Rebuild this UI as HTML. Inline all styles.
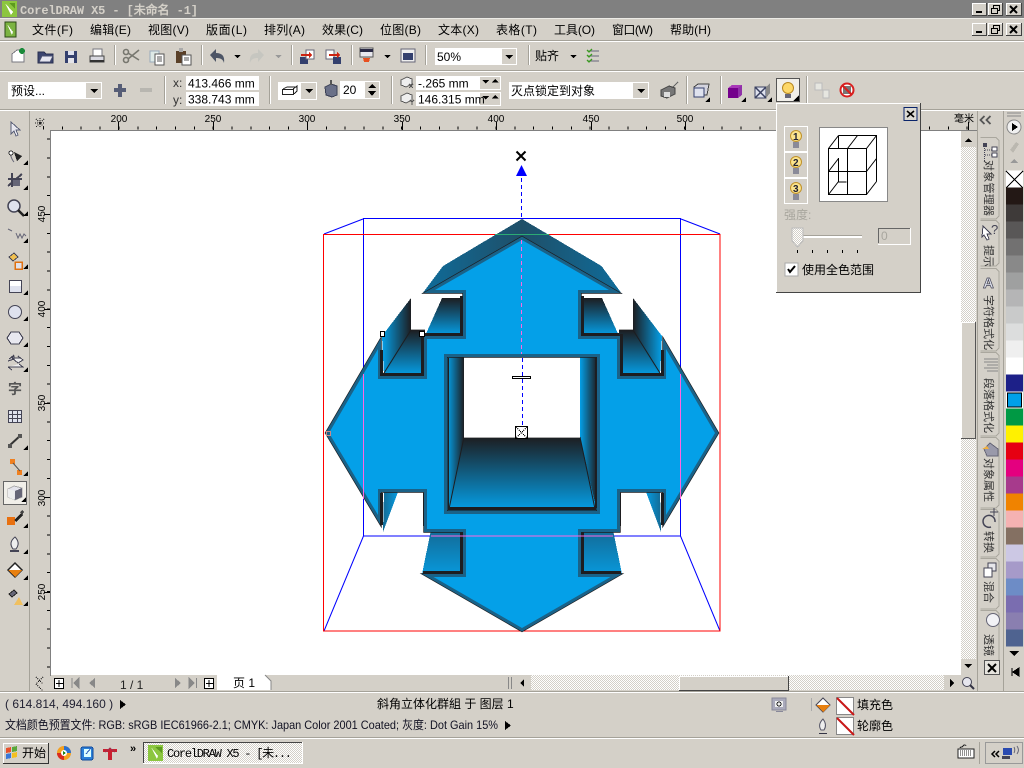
<!DOCTYPE html>
<html><head><meta charset="utf-8"><title>CorelDRAW X5</title>
<style>
html,body{margin:0;padding:0;background:#d4d0c8;overflow:hidden}
svg{display:block;position:absolute;left:0;top:0}
text{font-family:"Liberation Sans","WenQuanYi Zen Hei","Noto Sans CJK SC",sans-serif;font-size:12px;fill:#000}
.m{font-family:"Liberation Mono","WenQuanYi Zen Hei",monospace}
.r{font-size:10px;text-anchor:middle}
.d{font-size:11px;fill:#333}
</style></head><body>
<svg width="1024" height="768" viewBox="0 0 1024 768" xmlns="http://www.w3.org/2000/svg" shape-rendering="crispEdges">
<defs>
<pattern id="dith" width="2" height="2" patternUnits="userSpaceOnUse"><rect width="2" height="2" fill="#fff"/><rect width="1" height="1" fill="#d4d0c8"/><rect x="1" y="1" width="1" height="1" fill="#d4d0c8"/></pattern>
<linearGradient id="gv" x1="0" y1="0" x2="0" y2="1"><stop offset="0" stop-color="#1d1d20"/><stop offset="1" stop-color="#04a0e8"/></linearGradient>
<linearGradient id="gh" x1="0" y1="0" x2="1" y2="0"><stop offset="0" stop-color="#04a0e8"/><stop offset="1" stop-color="#1d1d20"/></linearGradient>
<linearGradient id="glow" x1="0" y1="0" x2="0" y2="1"><stop offset="0" stop-color="#136a96"/><stop offset="1" stop-color="#0898da"/></linearGradient>
<linearGradient id="gt" x1="0" y1="0" x2="1" y2="0"><stop offset="0" stop-color="#0f6c9a"/><stop offset=".5" stop-color="#1f4f68"/><stop offset="1" stop-color="#0f6c9a"/></linearGradient>
<linearGradient id="gs" x1="0" y1="0" x2="1" y2="0"><stop offset="0" stop-color="#156a94"/><stop offset="1" stop-color="#059ce2"/></linearGradient>
</defs>
<rect width="1024" height="768" fill="#d4d0c8"/>

<!-- title bar -->
<rect width="1024" height="18" fill="#808080"/>
<rect y="18" width="1024" height="1" fill="#ecebe6"/>
<rect x="2" y="1" width="15" height="16" fill="#8cc63f"/>
<path d="M5 3l8 9-2 3z" fill="#fff"/><path d="M9 3h6v6z" fill="#5d9a1e"/>
<text class="m" x="20" y="14" font-weight="bold" style="fill:#d4d0c8" textLength="178">CorelDRAW X5 - [未命名 -1]</text>
<g>
<rect x="972" y="3" width="15" height="13" fill="#d4d0c8"/><path d="M972.500 16V3.500H987" stroke="#fff" fill="none"/><path d="M986.500 3V15.500H972" stroke="#404040" fill="none"/><rect x="976" y="11" width="6" height="2" fill="#000"/>
<rect x="988" y="3" width="15" height="13" fill="#d4d0c8"/><path d="M988.500 16V3.500H1003" stroke="#fff" fill="none"/><path d="M1002.500 3V15.500H988" stroke="#404040" fill="none"/><rect x="993.500" y="5.500" width="6" height="5" fill="none" stroke="#000"/><rect x="991.500" y="8.500" width="6" height="5" fill="#d4d0c8" stroke="#000"/>
<rect x="1006" y="3" width="16" height="13" fill="#d4d0c8"/><path d="M1006.500 16V3.500H1022" stroke="#fff" fill="none"/><path d="M1021.500 3V15.500H1006" stroke="#404040" fill="none"/><path d="M1010 6l7 7M1017 6l-7 7" stroke="#000" stroke-width="2" shape-rendering="auto"/>
</g>
<g transform="translate(0,20)">
<rect x="972" y="3" width="15" height="13" fill="#d4d0c8"/><path d="M972.500 16V3.500H987" stroke="#fff" fill="none"/><path d="M986.500 3V15.500H972" stroke="#404040" fill="none"/><rect x="976" y="11" width="6" height="2" fill="#000"/>
<rect x="988" y="3" width="15" height="13" fill="#d4d0c8"/><path d="M988.500 16V3.500H1003" stroke="#fff" fill="none"/><path d="M1002.500 3V15.500H988" stroke="#404040" fill="none"/><rect x="993.500" y="5.500" width="6" height="5" fill="none" stroke="#000"/><rect x="991.500" y="8.500" width="6" height="5" fill="#d4d0c8" stroke="#000"/>
<rect x="1006" y="3" width="16" height="13" fill="#d4d0c8"/><path d="M1006.500 16V3.500H1022" stroke="#fff" fill="none"/><path d="M1021.500 3V15.500H1006" stroke="#404040" fill="none"/><path d="M1010 6l7 7M1017 6l-7 7" stroke="#000" stroke-width="2" shape-rendering="auto"/>
</g>

<!-- menu -->
<rect x="5" y="22" width="11" height="15" fill="#7cb342" stroke="#2b4a17"/><path d="M7 24l6 8-1 3z" fill="#fff"/>
<text x="32" y="34" textLength="41">文件(F)</text>
<text x="90" y="34" textLength="41">编辑(E)</text>
<text x="148" y="34" textLength="41">视图(V)</text>
<text x="206" y="34" textLength="41">版面(L)</text>
<text x="264" y="34" textLength="41">排列(A)</text>
<text x="322" y="34" textLength="41">效果(C)</text>
<text x="380" y="34" textLength="41">位图(B)</text>
<text x="438" y="34" textLength="41">文本(X)</text>
<text x="496" y="34" textLength="41">表格(T)</text>
<text x="554" y="34" textLength="41">工具(O)</text>
<text x="612" y="34" textLength="41">窗口(W)</text>
<text x="670" y="34" textLength="41">帮助(H)</text>
<rect y="40" width="1024" height="1" fill="#a5a299"/><rect y="41" width="1024" height="1" fill="#fff"/>

<!-- toolbar 1 -->
<path d="M12 54l5-4h7v12H12z" fill="#fff" stroke="#77777f"/><circle cx="22" cy="51" r="3" fill="#1a8a3a"/>
<path d="M38 63V52h6l2 2h7v9z" fill="#3b4470" stroke="#2a3050"/><path d="M39 62l3-6h11l-3 6z" fill="#e6e6f0" stroke="#4a5070"/>
<rect x="65" y="51" width="12" height="12" fill="#34406e"/><rect x="68" y="51" width="6" height="4" fill="#dfe2ee"/><rect x="68" y="58" width="6" height="5" fill="#e4e4ea"/>
<rect x="93" y="49" width="9" height="7" fill="#fff" stroke="#77777f"/><rect x="90" y="56" width="14" height="6" fill="#d8d8e0" stroke="#444"/><rect x="90" y="60" width="14" height="2" fill="#333"/>
<rect x="114" y="45" width="1" height="20" fill="#a5a299"/><rect x="115" y="45" width="1" height="20" fill="#fff"/>
<g shape-rendering="auto" fill="none" stroke="#77776f" stroke-width="1.600"><circle cx="126" cy="60" r="2.500"/><circle cx="126" cy="52" r="2.500"/><path d="M128 53l11 7M128 59l11-9"/></g>
<rect x="150" y="51" width="9" height="11" fill="#dde9e6" stroke="#9ab"/><rect x="155" y="54" width="9" height="11" fill="#fff" stroke="#555"/><path d="M157 57h5M157 59h5M157 61h5" stroke="#555"/>
<rect x="176" y="51" width="10" height="12" fill="#5a4028"/><rect x="179" y="48" width="4" height="4" fill="#aaa"/><rect x="182" y="55" width="9" height="10" fill="#fff" stroke="#555"/><path d="M184 58h5M184 60h5" stroke="#555"/>
<rect x="201" y="45" width="1" height="20" fill="#a5a299"/><rect x="202" y="45" width="1" height="20" fill="#fff"/>
<path d="M210 55l6-6v4c6 0 9 3 8 10-1-4-4-5-8-5v4z" fill="#4d5566" shape-rendering="auto"/>
<path d="M234 55h7l-3.500 3z" fill="#000"/>
<path d="M264 55l-6-6v4c-6 0-9 3-8 10 1-4 4-5 8-5v4z" fill="#c6c6c0" shape-rendering="auto"/>
<path d="M275 55h7l-3.500 3z" fill="#999"/>
<rect x="291" y="45" width="1" height="20" fill="#a5a299"/><rect x="292" y="45" width="1" height="20" fill="#fff"/>
<rect x="300" y="57" width="8" height="7" fill="#34406e"/><rect x="306" y="50" width="8" height="9" fill="#fff" stroke="#667"/><path d="M301 54h8v-2l3 3-3 3v-2h-8z" fill="#c21" />
<rect x="326" y="50" width="8" height="9" fill="#fff" stroke="#667"/><rect x="333" y="57" width="8" height="7" fill="#34406e"/><path d="M329 54h8v-2l3 3-3 3v-2h-8z" fill="#c21"/>
<rect x="351" y="45" width="1" height="20" fill="#a5a299"/><rect x="352" y="45" width="1" height="20" fill="#fff"/>
<rect x="360" y="48" width="13" height="9" fill="#e8e8ee" stroke="#555"/><rect x="360" y="49" width="13" height="3" fill="#2a2a44"/><path d="M363 58h7l-1 4h-5z" fill="#e85020"/>
<path d="M384 55h7l-3.500 3z" fill="#000"/>
<rect x="401" y="49" width="14" height="13" fill="#eee" stroke="#667"/><rect x="403" y="53" width="10" height="7" fill="#34406e"/>
<rect x="425" y="45" width="1" height="20" fill="#a5a299"/><rect x="426" y="45" width="1" height="20" fill="#fff"/>
<rect x="435" y="48" width="82" height="17" fill="#fff"/><rect x="502" y="49" width="14" height="15" fill="#d4d0c8"/><path d="M505 55h8l-4 4z" fill="#000"/>
<text x="437" y="61">50%</text>
<rect x="528" y="45" width="1" height="20" fill="#a5a299"/><rect x="529" y="45" width="1" height="20" fill="#fff"/>
<text x="535" y="60">贴齐</text><path d="M570 55h7l-3.500 3z" fill="#000"/>
<path d="M588 51h11M588 56h11M588 61h11" stroke="#66667a"/><path d="M587 50l2 2 3-3M587 55l2 2 3-3M587 60l2 2 3-3" fill="none" stroke="#3a9a20" stroke-width="1.300" shape-rendering="auto"/>
<rect y="70" width="1024" height="1" fill="#a5a299"/><rect y="71" width="1024" height="1" fill="#fff"/>

<!-- toolbar 2 -->
<rect x="8" y="82" width="94" height="17" fill="#fff"/><rect x="86" y="83" width="15" height="15" fill="#d4d0c8"/><path d="M90 89h8l-4 4z" fill="#000"/>
<text x="11" y="95">预设...</text>
<rect x="118" y="84" width="4" height="13" fill="#565d76"/><rect x="114" y="88" width="12" height="4" fill="#565d76"/>
<rect x="140" y="88" width="12" height="4" fill="#b8b6b0"/>
<rect x="164" y="76" width="1" height="28" fill="#a5a299"/><rect x="165" y="76" width="1" height="28" fill="#fff"/>
<text x="173" y="87" style="fill:#333">x:</text><text x="173" y="104" style="fill:#333">y:</text>
<rect x="186" y="76" width="73" height="14" fill="#fff"/><rect x="186" y="92" width="73" height="14" fill="#fff"/>
<text x="188" y="87.500">413.466 mm</text><text x="188" y="103.500">338.743 mm</text>
<rect x="269" y="76" width="1" height="28" fill="#a5a299"/><rect x="270" y="76" width="1" height="28" fill="#fff"/>
<rect x="278" y="82" width="39" height="18" fill="#fff"/><rect x="301" y="83" width="15" height="16" fill="#d4d0c8"/><path d="M305 89h8l-4 4z" fill="#000"/>
<path d="M282.500 89.500h11v5h-11zM293 89l4-3v5l-3 3M283 89l4-2h10" fill="#fff" stroke="#222"/>
<path d="M325 87l6-3 6 2v9l-5 2-6-2z" fill="#6a7088" stroke="#3a3f55"/><path d="M331 80v5" stroke="#555" stroke-width="2"/>
<rect x="340" y="81" width="40" height="18" fill="#fff"/><rect x="365" y="82" width="14" height="16" fill="#d4d0c8"/><path d="M372 84l-4 4h8zM372 96l-4-5h8z" fill="#000"/>
<text x="343" y="94">20</text>
<rect x="391" y="76" width="1" height="28" fill="#a5a299"/><rect x="392" y="76" width="1" height="28" fill="#fff"/>
<path d="M401 80l6-3 5 2v5l-6 3-5-2z" fill="#eee" stroke="#555"/><path d="M409 84l4 4M413 84l-4 4" stroke="#555"/>
<path d="M401 96l6-3 5 2v5l-6 3-5-2z" fill="#eee" stroke="#555"/><path d="M410 100l2 2 2-2M412 102v3" stroke="#555" fill="none"/>
<rect x="416" y="76" width="85" height="14" fill="#fff"/><rect x="416" y="92" width="85" height="14" fill="#fff"/>
<rect x="480" y="77" width="20" height="12" fill="#d4d0c8"/><rect x="480" y="93" width="20" height="12" fill="#d4d0c8"/>
<path d="M482 80h7l-3.500 3.500zM495 79l-3.500 3.500h7zM482 96h7l-3.500 3.500zM495 95l-3.500 3.500h7z" fill="#000"/>
<text x="418" y="87.500">-.265 mm</text><text x="418" y="103.500">146.315 mm</text>
<rect x="509" y="82" width="140" height="17" fill="#fff"/><rect x="633" y="83" width="15" height="15" fill="#d4d0c8"/><path d="M637 89h8l-4 4z" fill="#000"/>
<text x="511" y="95">灭点锁定到对象</text>
<path d="M661 90l8-4 6 2v6l-8 4-6-2z" fill="#777" stroke="#444"/><rect x="664" y="92" width="6" height="5" fill="#ddd"/><path d="M673 87l5-5" stroke="#666"/>
<rect x="686" y="76" width="1" height="28" fill="#a5a299"/><rect x="687" y="76" width="1" height="28" fill="#fff"/>
<path d="M694 87l4-3h11l-2 11h-13z" fill="#d4d4de" stroke="#444"/><rect x="694" y="88" width="10" height="9" fill="#dfe2ee" stroke="#34406e"/>
<path d="M705 102h5v-5z" fill="#000"/>
<rect x="720" y="76" width="1" height="28" fill="#a5a299"/><rect x="721" y="76" width="1" height="28" fill="#fff"/>
<rect x="728" y="88" width="10" height="10" fill="#74008c"/><path d="M728 88l4-3h10l-4 3z" fill="#a838b8"/><path d="M738 88l4-3v10l-4 3z" fill="#9030a8"/><path d="M741 102h5v-5z" fill="#000"/>
<rect x="755" y="87" width="11" height="11" fill="#dfe2ee" stroke="#3a4060"/><path d="M755 87l11 11M766 87l-11 11" stroke="#3a4060" stroke-width="1.500" shape-rendering="auto"/><path d="M766 87l4-4v10l-4 5z" fill="#888"/><path d="M767 102h5v-5z" fill="#000"/>
<rect x="776.500" y="78.500" width="23" height="23" fill="#f1efe9" stroke="#555"/>
<circle cx="788" cy="88" r="5.500" fill="#fdd868" stroke="#b88820" shape-rendering="auto"/><rect x="785" y="94" width="6" height="4" fill="#667"/><path d="M793 101h6v-6z" fill="#000"/>
<rect x="806" y="76" width="1" height="28" fill="#a5a299"/><rect x="807" y="76" width="1" height="28" fill="#fff"/>
<rect x="815" y="83" width="7" height="7" fill="#e6e6e0" stroke="#bbb"/><rect x="823" y="90" width="6" height="8" fill="#e6e6e0" stroke="#bbb"/>
<circle cx="847" cy="90" r="6.500" fill="#fff" stroke="#d82020" stroke-width="2" shape-rendering="auto"/><rect x="843" y="86" width="8" height="8" fill="#777"/><path d="M842 85l10 10" stroke="#d82020" stroke-width="2" shape-rendering="auto"/>
<rect y="109" width="1024" height="1" fill="#a5a299"/><rect y="110" width="1024" height="1" fill="#fff"/>

<!-- rulers -->
<rect x="29" y="111" width="1" height="581" fill="#a5a299"/>
<path d="M36 119l8 8M44 119l-8 8M40 118v10M35 123h10" stroke="#222" stroke-dasharray="1 1"/>
<line x1="43" y1="128" x2="975" y2="128" stroke="#000" stroke-width="3" stroke-dasharray="1 17.850"/>
<line x1="48.500" y1="138.600" x2="48.500" y2="672" stroke="#000" stroke-width="3" stroke-dasharray="1 17.850"/>
<path d="M118.500 122v8M213.500 122v8M307.500 122v8M402.500 122v8M496.500 122v8M591.500 122v8M685.500 122v8M779.500 122v8M968.500 122v8" stroke="#000"/>
<text class="r" x="119" y="122">200</text><text class="r" x="213" y="122">250</text><text class="r" x="307" y="122">300</text><text class="r" x="402" y="122">350</text><text class="r" x="496" y="122">400</text><text class="r" x="591" y="122">450</text><text class="r" x="685" y="122">500</text>
<text class="r" x="964" y="122">毫米</text>
<path d="M44 214.500h6M44 309.500h6M44 403.500h6M44 497.500h6M44 592.500h6" stroke="#000"/>
<text class="r" transform="translate(45,214) rotate(-90)">450</text>
<text class="r" transform="translate(45,309) rotate(-90)">400</text>
<text class="r" transform="translate(45,403) rotate(-90)">350</text>
<text class="r" transform="translate(45,498) rotate(-90)">300</text>
<text class="r" transform="translate(45,592) rotate(-90)">250</text>

<!-- canvas -->
<rect x="51" y="131" width="910" height="544" fill="#fff"/>
<rect x="50" y="130" width="927" height="1" fill="#808080"/><rect x="50" y="130" width="1" height="546" fill="#808080"/>

<!-- guide frames -->
<g fill="none" stroke-width="1">
<path d="M324 234l39-15M681 219l39 15M363.500 536L324 631M680.500 536L720 631" stroke="#00f" shape-rendering="auto"/>
<rect x="363.500" y="218.500" width="317" height="317.500" stroke="#00f"/>
<rect x="323.500" y="234.500" width="396.500" height="396.500" stroke="#f00"/>
</g>

<!-- extrusion art -->
<path d="M522 219L601.500 266 622 294 522 240 422 294 443 266z" fill="url(#gt)"/>
<g>
<path d="M442 298h21v38h-38z" fill="url(#gv)"/>
<path d="M411 298v32l-27 46-2-40z" fill="url(#gh)"/>
<path d="M411 330h14l-1 46h-40z" fill="url(#gv)"/>
<rect x="411" y="329" width="14" height="1" fill="#aaa"/>
<path d="M384 492h14l-15 40z" fill="url(#gs)"/>
<path d="M431 530h32v44h-41z" fill="url(#glow)"/>
<path d="M384 373l27-43" stroke="#1d1d20" fill="none" shape-rendering="auto"/>
</g>
<g transform="matrix(-1 0 0 1 1044 0)">
<path d="M442 298h21v38h-38z" fill="url(#gv)"/>
<path d="M411 298v32l-27 46-2-40z" fill="url(#gh)"/>
<path d="M411 330h14l-1 46h-40z" fill="url(#gv)"/>
<rect x="411" y="329" width="14" height="1" fill="#aaa"/>
<path d="M384 492h14l-15 40z" fill="url(#gs)"/>
<path d="M431 530h32v44h-41z" fill="url(#glow)"/>
<path d="M384 373l27-43" stroke="#1d1d20" fill="none" shape-rendering="auto"/>
</g>
<path d="M447 355h17v82l-17 74z" fill="url(#gh)"/>
<path d="M580 355h17v156l-17-74z" fill="url(#gh)"/>
<path d="M464 437h116l17 74H447z" fill="url(#gv)"/>
<path d="M464 437l-15 72M580 437l15 72" stroke="#1d1d20" shape-rendering="auto"/>
<g shape-rendering="auto" stroke-miterlimit="12" stroke-linejoin="miter" fill-rule="evenodd">
<path d="M522 240L435 290H466V339H427V379H378V349L329 433 378 515V489H427V529H466V577H433.500L522 628 610.500 577H578V529H617V489H666V515L715 433 666 349V379H617V339H578V290H609zM444 354V514H600V354z" fill="#1d1d20" stroke="#1d1d20" stroke-width="7.400"/>
<path d="M522 240L435 290H466V339H427V379H378V349L329 433 378 515V489H427V529H466V577H433.500L522 628 610.500 577H578V529H617V489H666V515L715 433 666 349V379H617V339H578V290H609zM444 354V514H600V354z" fill="#1a6288" stroke="#1a6288" stroke-width="6"/>
<path d="M522 240L435 290H466V339H427V379H378V349L329 433 378 515V489H427V529H466V577H433.500L522 628 610.500 577H578V529H617V489H666V515L715 433 666 349V379H617V339H578V290H609zM444 354V514H600V354z" fill="#04a0e8"/>
</g>
<!-- heavy inner shadow lines in pockets -->
<g fill="#1d1d20">
<rect x="425" y="333" width="38" height="3"/><rect x="460" y="296" width="3" height="40"/>
<rect x="382" y="373" width="42" height="3"/><rect x="421" y="334" width="3" height="42"/>
<rect x="380" y="350" width="3" height="26"/>
<rect x="423" y="571" width="40" height="3"/><rect x="460" y="532" width="3" height="42"/>
<rect x="380" y="493" width="3" height="32"/><rect x="423" y="493" width="0" height="0"/>
<rect x="423" y="493" width="1" height="33"/>
<rect x="581" y="333" width="38" height="3"/><rect x="581" y="296" width="3" height="40"/>
<rect x="620" y="373" width="42" height="3"/><rect x="620" y="334" width="3" height="42"/>
<rect x="661" y="350" width="3" height="26"/>
<rect x="581" y="571" width="40" height="3"/><rect x="581" y="532" width="3" height="42"/>
<rect x="661" y="493" width="3" height="32"/><rect x="620" y="493" width="1" height="33"/>
<rect x="448" y="507" width="148" height="3"/><rect x="448" y="358" width="1" height="150"/><rect x="595" y="358" width="1" height="150"/>
</g>
<rect x="464" y="358" width="116" height="79" fill="#fff"/>
<rect x="464" y="437" width="116" height="1" fill="#aaa"/>
<!-- xor lines -->
<path d="M363.500 374V499M680.500 374V499" stroke="#ff66e0"/>
<path d="M431 536H613" stroke="#ff66e0"/>
<path d="M495 234.500H549" stroke="#2cab74"/>
<path d="M521.500 178V219" stroke="#00f" stroke-dasharray="4 3"/>
<path d="M521.500 240V354" stroke="#ff66e0" stroke-dasharray="4 3"/>
<path d="M522.500 358V426" stroke="#00f" stroke-dasharray="4 3"/>
<path d="M516.500 151.500l9 9M525.500 151.500l-9 9" stroke="#000" stroke-width="2" shape-rendering="auto"/>
<path d="M521.500 165l5.500 11h-11z" fill="#00f"/>
<rect x="512.500" y="376.500" width="18" height="2" fill="#fff" stroke="#000"/>
<rect x="515.500" y="426.500" width="12" height="12" fill="#fff" stroke="#000"/>
<path d="M516 427l11 11M527 427l-11 11" stroke="#000" stroke-dasharray="1 1"/>
<rect x="380.500" y="331.500" width="4" height="5" fill="#fff" stroke="#000"/>
<rect x="419.500" y="331.500" width="5" height="5" fill="#fff" stroke="#000"/>
<rect x="326.500" y="431.500" width="4" height="4" fill="#1a6288" stroke="#c88"/>

<!-- right scrollbar -->
<rect x="961" y="131" width="15" height="544" fill="url(#dith)"/>
<rect x="961" y="131" width="15" height="16" fill="#d4d0c8"/><path d="M965 142l3.500-4 3.500 4z" fill="#000"/>
<rect x="961" y="322" width="15" height="116" fill="#d4d0c8" stroke="none"/><path d="M961.500 438V322.500H975" stroke="#fff" fill="none"/><path d="M975.500 322V438.500H961" stroke="#555" fill="none"/>
<rect x="961" y="659" width="15" height="16" fill="#d4d0c8"/><path d="M964 664h8l-4 4z" fill="#000"/>

<!-- docker tabs -->
<rect x="977" y="111" width="1" height="581" fill="#a5a299"/>
<path d="M984.500 116l-4 4 4 4M990.500 116l-4 4 4 4" fill="none" stroke="#555" stroke-width="1.800" shape-rendering="auto"/>
<g fill="none" stroke="#aaa79e">
<path d="M980.500 137.500H996l3 3V216l-3 3H980.500"/>
<path d="M980.500 220.500H996l3 3V263l-3 3H980.500"/>
<path d="M980.500 268.500H996l3 3V348l-3 3H980.500"/>
<path d="M980.500 352.500H996l3 3V433l-3 3H980.500"/>
<path d="M980.500 437.500H996l3 3V505l-3 3H980.500"/>
<path d="M980.500 509.500H996l3 3V554l-3 3H980.500"/>
<path d="M980.500 558.500H996l3 3V606l-3 3H980.500"/>
<path d="M980.500 610.500H996l3 3V675"/>
</g>
<rect x="983" y="143" width="4" height="4" fill="#445"/><rect x="992" y="147" width="5" height="4" fill="#fff" stroke="#445"/><rect x="992" y="153" width="5" height="4" fill="#fff" stroke="#445"/><path d="M984.500 148v13M985 150h7M985 155h7" stroke="#445" stroke-dasharray="1 1"/>
<text class="d" transform="translate(985,160) rotate(90)" textLength="56">对象管理器</text>
<path d="M983 226l8 8h-4l2 5-2 1-3-5-2 2z" fill="#fff" stroke="#445"/><text x="991" y="234" style="fill:#445;font-size:13px">?</text>
<text class="d" transform="translate(985,245) rotate(90)">提示</text>
<text x="983" y="288" style="font-size:15px;font-weight:bold;fill:#dfe2ee;stroke:#445;stroke-width:.7">A</text>
<text class="d" transform="translate(985,295) rotate(90)">字符格式化</text>
<path d="M984 359h14M984 362h14M987 365h11M984 368h14M987 371h11" stroke="#888"/>
<text class="d" transform="translate(985,378) rotate(90)">段落格式化</text>
<path d="M984 449l6-6 8 6v7h-11z" fill="#99a" stroke="#667"/><path d="M982 449l5-3 2 3z" fill="#f0b040"/>
<text class="d" transform="translate(985,458) rotate(90)">对象属性</text>
<path d="M995 522a6 6 0 1 0 -4 5" fill="none" stroke="#445" stroke-width="1.500" shape-rendering="auto"/><path d="M990 512h8M994 508v8" stroke="#445"/>
<text class="d" transform="translate(985,531) rotate(90)">转换</text>
<rect x="988" y="563" width="8" height="8" fill="#e6e6ea" stroke="#445"/><rect x="984" y="568" width="8" height="9" fill="#fff" stroke="#445"/>
<text class="d" transform="translate(985,581) rotate(90)">混合</text>
<circle cx="993" cy="620" r="6.500" fill="#f2f2f6" stroke="#667" shape-rendering="auto"/>
<text class="d" transform="translate(985,634) rotate(90)">透镜</text>
<rect x="984.500" y="660.500" width="15" height="14" fill="#e6e4de" stroke="#555"/><path d="M988 664l8 8M996 664l-8 8" stroke="#000" stroke-width="2" shape-rendering="auto"/>

<!-- palette -->
<rect x="1003" y="111" width="1" height="581" fill="#a5a299"/>
<path d="M1007 113h14M1007 116h14" stroke="#888"/>
<circle cx="1014" cy="127" r="7" fill="#f0f0f0" stroke="#888" shape-rendering="auto"/><path d="M1012 123l6 4-6 4z" fill="#000"/>
<path d="M1010 150l6-8 3 2-6 9z" fill="#bbb8b0"/>
<path d="M1010 163l4-4 4 4z" fill="#999"/>
<rect x="1006" y="170.500" width="17" height="17" fill="#fff"/><path d="M1006 171l17 17M1023 171l-17 17" stroke="#000"/>
<rect x="1006" y="187.500" width="17" height="17" fill="#231815"/>
<rect x="1006" y="204.500" width="17" height="17" fill="#3e3a39"/>
<rect x="1006" y="221.500" width="17" height="17" fill="#595757"/>
<rect x="1006" y="238.500" width="17" height="17" fill="#727171"/>
<rect x="1006" y="255.500" width="17" height="17" fill="#898989"/>
<rect x="1006" y="272.500" width="17" height="17" fill="#9fa0a0"/>
<rect x="1006" y="289.500" width="17" height="17" fill="#b5b5b6"/>
<rect x="1006" y="306.500" width="17" height="17" fill="#c9caca"/>
<rect x="1006" y="323.500" width="17" height="17" fill="#dcdddd"/>
<rect x="1006" y="340.500" width="17" height="17" fill="#efefef"/>
<rect x="1006" y="357.500" width="17" height="17" fill="#fff"/>
<rect x="1006" y="374.500" width="17" height="17" fill="#1d2088"/>
<rect x="1006" y="391.500" width="17" height="17" fill="#fff"/><rect x="1007.500" y="393" width="14" height="14" fill="#00a0e9" stroke="#000"/>
<rect x="1006" y="408.500" width="17" height="17" fill="#009944"/>
<rect x="1006" y="425.500" width="17" height="17" fill="#fff100"/>
<rect x="1006" y="442.500" width="17" height="17" fill="#e60012"/>
<rect x="1006" y="459.500" width="17" height="17" fill="#e4007f"/>
<rect x="1006" y="476.500" width="17" height="17" fill="#a73a8c"/>
<rect x="1006" y="493.500" width="17" height="17" fill="#f08300"/>
<rect x="1006" y="510.500" width="17" height="17" fill="#f5b2b2"/>
<rect x="1006" y="527.500" width="17" height="17" fill="#847062"/>
<rect x="1006" y="544.500" width="17" height="17" fill="#ccc8e4"/>
<rect x="1006" y="561.500" width="17" height="17" fill="#a69ac9"/>
<rect x="1006" y="578.500" width="17" height="17" fill="#6d8cc6"/>
<rect x="1006" y="595.500" width="17" height="17" fill="#7a6db0"/>
<rect x="1006" y="612.500" width="17" height="17" fill="#8a7fb0"/>
<rect x="1006" y="629.500" width="17" height="17" fill="#4f6390"/>
<path d="M1009 651h10l-5 5z" fill="#000"/>
<path d="M1012 668v8M1019 668l-6 4 6 4z" fill="#000" stroke="#000"/>

<!-- left toolbox icons -->
<path d="M11 122l0 12 3-3 2 5 2-1-2-5h4z" fill="#e8e8f0" stroke="#5a6078"/>
<path d="M9 151c2 4 2 8 5 11" fill="none" stroke="#667" shape-rendering="auto"/><circle cx="11" cy="153" r="2" fill="#fff" stroke="#333"/><path d="M14 152l8 4-5 5z" fill="#222"/><path d="M23 165h5v-5z" fill="#000"/>
<path d="M8 179h14M12 173v14M8 186l14-12" stroke="#445" stroke-width="2"/><rect x="13" y="180" width="7" height="6" fill="#667"/><path d="M23 190h5v-5z" fill="#000"/>
<circle cx="14" cy="206" r="6" fill="#dfe2ee" stroke="#445" stroke-width="1.500" shape-rendering="auto"/><path d="M18 210l6 6" stroke="#222" stroke-width="2.500" shape-rendering="auto"/><path d="M23 216h5v-5z" fill="#000"/>
<path d="M8 229l4 2M16 233l2 5 2-4 2 4 2-4 2 2" fill="none" stroke="#667" shape-rendering="auto"/><path d="M23 243h5v-5z" fill="#000"/>
<path d="M9 257l5-4 4 4-5 4z" fill="#f0c050" stroke="#445"/><path d="M15 262h7v7h-7z" fill="#dfe2ee" stroke="#e07010" stroke-width="1.500"/><path d="M23 269h5v-5z" fill="#000"/>
<rect x="9.500" y="280.500" width="12" height="12" fill="#dfe2ee" stroke="#445"/><rect x="10" y="281" width="11" height="5" fill="#fff"/><path d="M23 295h5v-5z" fill="#000"/>
<circle cx="15" cy="312" r="6.500" fill="#dfe2ee" stroke="#445" shape-rendering="auto"/><path d="M23 321h5v-5z" fill="#000"/>
<path d="M11 332h8l4 6-4 6h-8l-4-6z" fill="#e8e8f0" stroke="#445"/><path d="M23 347h5v-5z" fill="#000"/>
<path d="M8 361l6-2v-3l-5 3 5-4M12 358h8l-2-2 5 4-5 3zM8 367h15l-4-3M8 367l4 3" fill="#eee" stroke="#445"/><path d="M23 372h5v-5z" fill="#000"/>
<text x="8" y="394" style="font-size:14px;fill:#555;font-weight:bold">字</text>
<rect x="8.500" y="410.500" width="13" height="12" fill="#dfe2ee" stroke="#445"/><path d="M12.500 410v12M17.500 410v12M8 414.500h13M8 418.500h13" stroke="#445"/>
<path d="M9 446l12-11" stroke="#333" stroke-width="2" shape-rendering="auto"/><rect x="8" y="444" width="4" height="4" fill="#555"/><rect x="18" y="434" width="4" height="4" fill="#555"/><path d="M23 450h5v-5z" fill="#000"/>
<rect x="10" y="459" width="5" height="5" fill="#f08020"/><rect x="17" y="470" width="5" height="5" fill="#f08020"/><path d="M13 463l7 8" stroke="#555" shape-rendering="auto"/><path d="M23 476h5v-5z" fill="#000"/>
<rect x="3.500" y="481.500" width="23" height="23" fill="#f1efe9" stroke="#666"/>
<path d="M8 489l6-3 8 2v9l-7 3-7-3z" fill="#e4e4ec" stroke="#aaa"/><path d="M15 491l7-3v9l-7 3z" fill="#667"/><path d="M8 489l7 2-1 9-6-3z" fill="#eee"/><path d="M21 502h5v-5z" fill="#000"/>
<rect x="7" y="517" width="8" height="8" fill="#e87010"/><path d="M14 520l7-7 2 2-7 7z" fill="#222"/><path d="M20 512l2-2 2 2-2 3z" fill="#444"/><path d="M23 528h5v-5z" fill="#000"/>
<path d="M15 537c4 4 4 8 1 12h-3c-3-4-3-8 2-12z" fill="#eee" stroke="#445" shape-rendering="auto"/><path d="M10 551h9" stroke="#445" stroke-width="2"/><path d="M23 554h5v-5z" fill="#000"/>
<path d="M8 570l7-7 7 7-7 7z" fill="#fff" stroke="#222" stroke-width="1.500" shape-rendering="auto"/><path d="M8 570h14l-7 7z" fill="#e88010"/><path d="M23 580h5v-5z" fill="#000"/>
<path d="M9 594l5-4 3 3-5 4z" fill="#667" stroke="#222"/><path d="M14 605l5-8 4 8z" fill="#f0c060"/><path d="M23 606h5v-5z" fill="#000"/>

<!-- popup -->
<rect x="776" y="103" width="144" height="189" fill="#d4d0c8"/>
<path d="M776.500 292V103.500H920" fill="none" stroke="#fff"/>
<path d="M920.500 103V292.500H776" fill="none" stroke="#444" stroke-width="1"/>
<rect x="904" y="107.500" width="13" height="13" fill="#dcdad4" stroke="#0a246a"/><path d="M907 111l7 6M914 111l-7 6" stroke="#000" stroke-width="1.600" shape-rendering="auto"/>
<rect x="784.500" y="126.500" width="23" height="25" fill="#d4d0c8" stroke="#fff"/><rect x="784.500" y="152.500" width="23" height="25" fill="#d4d0c8" stroke="#fff"/><rect x="784.500" y="178.500" width="23" height="25" fill="#d4d0c8" stroke="#fff"/>
<g shape-rendering="auto"><circle cx="796" cy="136" r="5.500" fill="#fbe38c" stroke="#c0922a"/><circle cx="796" cy="162" r="5.500" fill="#fbe38c" stroke="#c0922a"/><circle cx="796" cy="188" r="5.500" fill="#fbe38c" stroke="#c0922a"/></g>
<rect x="793" y="142" width="6" height="6" fill="#8a8a98"/><rect x="793" y="168" width="6" height="6" fill="#8a8a98"/><rect x="793" y="194" width="6" height="6" fill="#8a8a98"/>
<text x="793" y="140" style="font-size:10px;font-weight:bold;fill:#223">1</text><text x="793" y="166" style="font-size:10px;font-weight:bold;fill:#223">2</text><text x="793" y="192" style="font-size:10px;font-weight:bold;fill:#223">3</text>
<rect x="819.500" y="127.500" width="68" height="74" fill="#fff" stroke="#888"/>
<g fill="none" stroke="#000" stroke-width="1">
<rect x="828.500" y="148.500" width="38" height="46"/><path d="M847.500 148v46M828 171.500h39"/>
<path d="M838.500 135.500H876.500V181.500M828.500 148.500l10-13M866.500 148.500l10-13M866.500 194.500l10-13M847.500 148.500l10-13M828.500 171.500l10-13M866.500 171.500l10-13M838.500 135.500V148M828.500 194.500l10-13M838.500 158v24h8" shape-rendering="auto"/>
</g>
<text x="784" y="219" style="fill:#a8a69e">强度:</text>
<rect x="803" y="235" width="59" height="3" fill="#fff"/><rect x="803" y="235" width="59" height="1" fill="#a5a299"/>
<path d="M792 228h11v13l-5.500 6-5.500-6z" fill="url(#dith)" stroke="#bbb"/>
<path d="M797.500 250v3M812.500 250v3M827.500 250v3M842.500 250v3M857.500 250v3" stroke="#000"/>
<rect x="878.500" y="228.500" width="32" height="15" fill="#d4d0c8"/><path d="M878.500 243V228.500H910" stroke="#666" fill="none"/><path d="M910.500 228V244.500H878" stroke="#fff" fill="none"/>
<text x="881" y="240" style="fill:#a8a69e">0</text>
<rect x="785" y="263" width="13" height="13" fill="#fff" stroke="#aaa"/><path d="M788 269l2 3 5-6" fill="none" stroke="#000" stroke-width="2" shape-rendering="auto"/>
<text x="802" y="274">使用全色范围</text>

<!-- bottom nav -->
<path d="M36 677l7 7M43 677l-7 7M36 684l7 7" stroke="#222" stroke-dasharray="1 1"/>
<rect x="54.500" y="678.500" width="9" height="10" fill="#fff" stroke="#000"/><path d="M59 680v7M56 683.500h7" stroke="#000"/>
<path d="M72 678v10M79 678l-5 5 5 5z" fill="#888" stroke="#888"/>
<path d="M95 678l-6 5 6 5z" fill="#888"/>
<text x="120" y="689" style="fill:#222">1 / 1</text>
<path d="M175 678l6 5-6 5z" fill="#888"/>
<path d="M189 678l5 5-5 5zM196.500 678v10" fill="#888" stroke="#888"/>
<rect x="204.500" y="678.500" width="9" height="10" fill="#fff" stroke="#000"/><path d="M209 680v7M206 683.500h7" stroke="#000"/>
<path d="M217 675h48l6 6v9h-54z" fill="#fff"/><path d="M265 675l6 6v9" fill="none" stroke="#888" shape-rendering="auto"/>
<text x="233" y="687">页 1</text>
<rect x="515" y="675" width="445" height="15" fill="url(#dith)"/>
<rect x="515" y="675" width="16" height="15" fill="#d4d0c8"/><path d="M524 679l-4 4 4 4z" fill="#000"/>
<rect x="679" y="676" width="109" height="14" fill="#d4d0c8"/><path d="M679.500 690V676.500H788" stroke="#fff" fill="none"/><path d="M788.500 676V690.500H679" stroke="#444" fill="none"/>
<rect x="944" y="675" width="16" height="15" fill="#d4d0c8"/><path d="M950 679l4 4-4 4z" fill="#000"/>
<circle cx="967" cy="682" r="4.500" fill="#e6e6ee" stroke="#445" shape-rendering="auto"/><path d="M970 685l4 4" stroke="#334" stroke-width="2" shape-rendering="auto"/>
<rect x="508" y="677" width="1" height="12" fill="#888"/><rect x="511" y="677" width="1" height="12" fill="#888"/>

<!-- status -->
<rect y="692" width="1024" height="1" fill="#fff"/><rect y="691" width="1024" height="1" fill="#a5a299"/>
<text x="5" y="708" style="fill:#223">( 614.814, 494.160 )</text>
<path d="M120 700l6 4.500-6 4.500z" fill="#000"/>
<text x="377" y="708">斜角立体化群組 于 图层 1</text>
<rect x="772" y="698" width="14" height="12" fill="#aab" stroke="#889"/><rect x="775" y="701" width="8" height="6" fill="#eee"/><circle cx="779" cy="704" r="2" fill="none" stroke="#222"/><rect x="776" y="711" width="7" height="1" fill="#889"/>
<rect x="811" y="698" width="1" height="13" fill="#aaa"/>
<path d="M816 705l7-7 7 7-7 7z" fill="#fff" stroke="#445" shape-rendering="auto"/><path d="M816 705h14l-7 7z" fill="#e88010"/>
<rect x="836.500" y="697.500" width="17" height="17" fill="#fff" stroke="#888"/><path d="M837 698l17 17" stroke="#c81818" stroke-width="2" shape-rendering="auto"/>
<text x="857" y="709">填充色</text>
<path d="M823 719c3 4 3 8 1 11h-3c-2-3-2-7 2-11z" fill="#eee" stroke="#556" shape-rendering="auto"/><rect x="819" y="733" width="8" height="1" fill="#334"/>
<rect x="836.500" y="717.500" width="17" height="17" fill="#fff" stroke="#888"/><path d="M837 718l17 17" stroke="#c81818" stroke-width="2" shape-rendering="auto"/>
<text x="857" y="730">轮廓色</text>
<text x="5" y="729" textLength="493" lengthAdjust="spacingAndGlyphs" style="fill:#112">文档颜色预置文件: RGB: sRGB IEC61966-2.1; CMYK: Japan Color 2001 Coated; 灰度: Dot Gain 15%</text>
<path d="M505 721l6 4.500-6 4.500z" fill="#000"/>
<rect y="737" width="1024" height="1" fill="#a5a299"/><rect y="738" width="1024" height="1" fill="#fff"/>

<!-- taskbar -->
<rect x="3" y="743" width="46" height="21" fill="#d4d0c8"/><path d="M3.500 764V743.500H49" stroke="#fff" fill="none"/><path d="M48.500 743V763.500H3" stroke="#333" fill="none"/>
<path d="M6 748l5-1v5l-5 1z" fill="#e8502a"/><path d="M12 747l5-1v5l-5 1z" fill="#5aa83a"/><path d="M6 754l5-1v5l-5 1z" fill="#3a78d8"/><path d="M12 753l5-1v5l-5 1z" fill="#f4c020"/>
<text x="22" y="757">开始</text>
<circle cx="64" cy="753" r="7" fill="#f4a020" shape-rendering="auto"/><path d="M64 746a7 7 0 0 1 7 7h-7z" fill="#2a70d0" shape-rendering="auto"/><path d="M57 753a7 7 0 0 0 7 7v-7z" fill="#d82a20" shape-rendering="auto"/><circle cx="64" cy="753" r="3" fill="#fff" shape-rendering="auto"/><path d="M63 751l3 2-3 2z" fill="#282"/>
<rect x="81" y="747" width="12" height="13" rx="2" fill="#2a80d8" stroke="#114a9a"/><rect x="84" y="749" width="7" height="8" fill="#dff"/><path d="M86 754l5-6" stroke="#2a5ab8"/>
<path d="M103 749h14v3h-5v8h-4v-8h-5z" fill="#c82030"/><path d="M105 752l5-4 5 4" fill="none" stroke="#a03050"/>
<text x="130" y="752" style="font-size:11px;font-weight:bold">»</text>
<rect x="143" y="742" width="159" height="21" fill="url(#dith)"/><path d="M143.500 763V742.500H302" stroke="#444" fill="none"/><path d="M302.500 742V763.500H143" stroke="#fff" fill="none"/>
<rect x="148" y="745" width="15" height="16" fill="#8cc63f"/><path d="M151 747l7 9-1 3z" fill="#fff"/><path d="M155 747h7v6z" fill="#5d9a1e"/>
<text class="m" x="167" y="757" textLength="125">CorelDRAW X5 - [未...</text>
<rect x="958" y="749" width="16" height="9" fill="#fff" stroke="#222"/><path d="M960 751h12M960 753h12M960 755h12" stroke="#222" stroke-dasharray="1 1"/><path d="M960 748c1-2 2 0 3-2s2 0 3-1" fill="none" stroke="#222"/>
<rect x="979" y="742" width="1" height="22" fill="#a5a299"/>
<rect x="985.500" y="742.500" width="37" height="21" fill="none" stroke="#999"/>
<path d="M995 751l-3 3 3 3M999 751l-3 3 3 3" fill="none" stroke="#000" stroke-width="1.500" shape-rendering="auto"/>
<rect x="1003" y="748" width="9" height="7" fill="#2a4ab0"/><rect x="1002" y="756" width="8" height="3" fill="#445"/><path d="M1014 747c1 2 1 4 0 6M1017 746c2 3 2 5 0 8" fill="none" stroke="#667" shape-rendering="auto"/>
</svg>
</body></html>
